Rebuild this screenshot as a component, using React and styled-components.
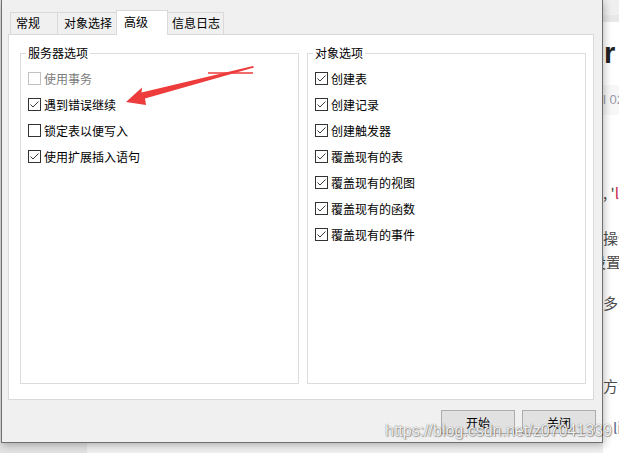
import React from "react";
import styled, { createGlobalStyle } from "styled-components";

const GlobalStyle = createGlobalStyle`
  html, body { margin: 0; padding: 0; }
  body {
    font-family: "Noto Sans CJK SC", "Microsoft YaHei", sans-serif;
    background: #f0f0f0;
  }
`;

const Stage = styled.div`
  position: relative;
  width: 619px;
  height: 453px;
  overflow: hidden;
  display: flex;
  align-items: flex-start;
  background: linear-gradient(to right, #e3e3e3 0 87px, #f0f0f0 87px);
`;

const Dialog = styled.div`
  position: relative;
  z-index: 1;
  flex: none;
  box-sizing: border-box;
  margin-left: 1px;
  width: 602px;
  height: 443px;
  background: #f0f0f0;
  border: 1px solid #6f6f6f;
  border-top: none;
  box-shadow: 1px 2px 8px rgba(0, 0, 0, 0.28);
  padding: 10px 8px 8px 6px;
  display: flex;
  flex-direction: column;
  font-size: 12px;
  color: #000;
`;

const TabRow = styled.div`
  position: relative;
  z-index: 1;
  display: flex;
  align-items: flex-end;
  height: 24px;
  padding-left: 2px;
`;

const Tab = styled.div`
  box-sizing: border-box;
  width: ${(p) => p.$w}px;
  height: ${(p) => (p.$active ? 25 : 22)}px;
  margin-bottom: ${(p) => (p.$active ? -1 : 0)}px;
  padding-left: ${(p) => p.$pl}px;
  line-height: ${(p) => (p.$active ? 22 : 20)}px;
  background: ${(p) => (p.$active ? "#fff" : "#f0f0f0")};
  border: 1px solid #d9d9d9;
  border-bottom: none;
  white-space: nowrap;
  & + & { margin-left: -1px; }
`;

const Panel = styled.div`
  box-sizing: border-box;
  height: 366px;
  background: #fff;
  border: 1px solid #d9d9d9;
  display: grid;
  grid-template-columns: 279px 279px;
  column-gap: 8px;
  padding: 10px 0 15px 11px;
`;

const Group = styled.fieldset`
  box-sizing: border-box;
  margin: 0;
  min-width: 0;
  padding: 4px 0 0 7px;
  border: 1px solid #dcdcdc;
`;

const Legend = styled.legend`
  padding: 0 2px;
  margin-left: -2px;
  font-size: 12px;
  line-height: 16px;
`;

const Row = styled.div`
  display: flex;
  align-items: center;
  gap: 3px;
  height: 26px;
  color: ${(p) => (p.$disabled ? "#7c7c7c" : "#000")};
  white-space: nowrap;
`;

const Box = styled.span`
  box-sizing: border-box;
  flex: none;
  width: 13px;
  height: 13px;
  border: 1px solid ${(p) => (p.$disabled ? "#c2c2c2" : "#333")};
  background: #fff;
  display: flex;
  position: relative;
  & svg { position: absolute; left: -1px; top: -1px; }
`;

const ButtonRow = styled.div`
  display: flex;
  justify-content: flex-end;
  gap: 7px;
  margin-top: 10px;
  margin-right: -2px;
`;

const Button = styled.button`
  box-sizing: border-box;
  width: 74px;
  height: 24px;
  padding: 0;
  background: #e1e1e1;
  border: 1px solid #adadad;
  font-family: inherit;
  font-size: 12px;
  color: #000;
`;

const Behind = styled.div`
  flex: 1;
  height: 453px;
  background: #fff;
  overflow: hidden;
  display: flex;
  flex-direction: column;
  white-space: nowrap;
  color: #4d4d4d;
`;

const Bar = styled.div`
  flex: none;
  height: ${(p) => p.$h}px;
  background: ${(p) => p.$bg};
`;

const TitleFrag = styled.div`
  flex: none;
  height: 63px;
  font-family: "Liberation Sans", sans-serif;
  font-weight: bold;
  font-size: 29px;
  line-height: 63px;
  color: #222;
  padding-left: 1px;
`;

const MetaBand = styled.div`
  flex: none;
  height: 30px;
  line-height: 30px;
  background: #f7f7f7;
  font-family: "Liberation Sans", sans-serif;
  font-size: 13px;
  color: #999aaa;
`;

const Line = styled.div`
  flex: none;
  height: 24px;
  line-height: 24px;
  margin-top: ${(p) => p.$mt}px;
  text-indent: ${(p) => p.$indent || 0}px;
  font-size: 15px;
  color: ${(p) => p.$color || "#4d4d4d"};
`;

const Red = styled.span`
  color: #c7254e;
`;

const Watermark = styled.div`
  position: absolute;
  left: 385px;
  top: 422px;
  z-index: 3;
  font-family: "Liberation Sans", Arial, sans-serif;
  font-size: 16px;
  color: rgba(255, 255, 255, 0.92);
  text-shadow: 0 0 1px rgba(0, 0, 0, 0.6), 1px 1px 1px rgba(0, 0, 0, 0.3);
  white-space: nowrap;
  pointer-events: none;
`;

const ArrowLayer = styled.svg`
  position: absolute;
  left: 0;
  top: 0;
  z-index: 4;
  pointer-events: none;
`;

const Check = () => (
  <svg width="13" height="13" viewBox="0 0 13 13">
    <polyline points="2.5,6.5 5,9 10.5,3.5" fill="none" stroke="#3a3a3a" strokeWidth="1" />
  </svg>
);

const CheckItem = ({ label, checked, disabled }) => (
  <Row $disabled={disabled}>
    <Box $disabled={disabled}>{checked && <Check />}</Box>
    <span>{label}</span>
  </Row>
);

const tabs = [
  { label: "常规", w: 48, pl: 5 },
  { label: "对象选择", w: 60, pl: 6 },
  { label: "高级", w: 52, pl: 7, active: true },
  { label: "信息日志", w: 57, pl: 4 },
];

const serverOpts = [
  { label: "使用事务", checked: false, disabled: true },
  { label: "遇到错误继续", checked: true },
  { label: "锁定表以便写入", checked: false },
  { label: "使用扩展插入语句", checked: true },
];

const objectOpts = [
  "创建表",
  "创建记录",
  "创建触发器",
  "覆盖现有的表",
  "覆盖现有的视图",
  "覆盖现有的函数",
  "覆盖现有的事件",
];

export default function App() {
  return (
    <>
      <GlobalStyle />
      <Stage>
        <Dialog>
          <TabRow>
            {tabs.map((t) => (
              <Tab key={t.label} $w={t.w} $pl={t.pl} $active={t.active}>
                {t.label}
              </Tab>
            ))}
          </TabRow>
          <Panel>
            <Group>
              <Legend>服务器选项</Legend>
              {serverOpts.map((o) => (
                <CheckItem key={o.label} {...o} />
              ))}
            </Group>
            <Group>
              <Legend>对象选项</Legend>
              {objectOpts.map((l) => (
                <CheckItem key={l} label={l} checked />
              ))}
            </Group>
          </Panel>
          <ButtonRow>
            <Button>开始</Button>
            <Button>关闭</Button>
          </ButtonRow>
        </Dialog>
        <Behind>
          <Bar $h={15} $bg="#efefef" />
          <Bar $h={7} $bg="#e8e8e8" />
          <TitleFrag>r</TitleFrag>
          <MetaBand>l 02</MetaBand>
          <Line $mt={66}>
            , '<Red>l</Red>
          </Line>
          <Line $mt={21}>操作</Line>
          <Line $mt={0} $indent={-12}>设置</Line>
          <Line $mt={17}>多，</Line>
          <Line $mt={59}>方法</Line>
          <Line $mt={18} $indent={10} $color="#5a6a8a">li</Line>
        </Behind>
        <ArrowLayer width="619" height="453" viewBox="0 0 619 453">
          <line x1="208" y1="73" x2="253" y2="73" stroke="#ee3b3b" strokeWidth="1.5" />
          <polygon
            points="126,102 142,87.5 141.5,92.5 253,66 254,67.5 145,98.5 146,105"
            fill="#ee3b3b"
          />
        </ArrowLayer>
        <Watermark>https://blog.csdn.net/z07041339</Watermark>
      </Stage>
    </>
  );
}
